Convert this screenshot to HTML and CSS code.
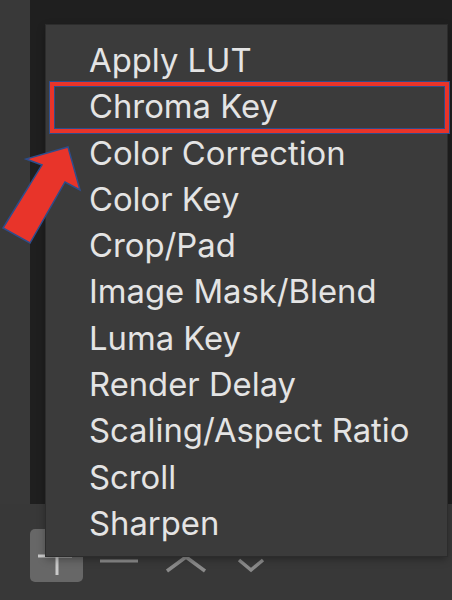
FILE: index.html
```html
<!DOCTYPE html>
<html>
<head>
<meta charset="utf-8">
<link rel="stylesheet" href="styles.css">
</head>
<body>
<div class="app">
  <div class="workspace">
    <div class="sidebar"></div>
    <div class="panel"></div>
  </div>
  <div class="toolbar">
    <button class="tool add" aria-label="Add">
      <svg width="53" height="53" viewBox="0 0 53 53"><path d="M8 27H42M27 8V46" stroke="#c9c9c9" stroke-width="3" fill="none"/></svg>
    </button>
    <span class="tool"><svg width="40" height="30" viewBox="0 0 40 30"><path d="M0 27H38" stroke="#8a8a8a" stroke-width="3"/></svg></span>
    <span class="tool"><svg width="44" height="40" viewBox="0 0 44 40"><path d="M2 37L21 23L40 37" stroke="#8a8a8a" stroke-width="3.5" fill="none"/></svg></span>
    <span class="tool"><svg width="30" height="40" viewBox="0 0 30 40"><path d="M2 26L14 36L26 26" stroke="#8a8a8a" stroke-width="3.5" fill="none"/></svg></span>
  </div>
  <ul class="menu">
    <li>Apply LUT</li>
    <li class="marked">Chroma Key</li>
    <li>Color Correction</li>
    <li>Color Key</li>
    <li>Crop/Pad</li>
    <li>Image Mask/Blend</li>
    <li>Luma Key</li>
    <li>Render Delay</li>
    <li>Scaling/Aspect Ratio</li>
    <li>Scroll</li>
    <li>Sharpen</li>
  </ul>
  <svg class="arrow" width="90" height="250" viewBox="0 0 90 250">
    <polygon points="68,147 80,190 65,182 30,243 3,228 42,165 26,159" fill="#e8342a" stroke="#2d4d8c" stroke-width="1.5" stroke-linejoin="miter"/>
  </svg>
</div>
</body>
</html>
```
FILE: styles.css
```css
html, body {
  margin: 0;
  padding: 0;
}
body {
  background: #383838;
  width: 452px;
  height: 600px;
  overflow: hidden;
  font-family: Inter, "Liberation Sans", sans-serif;
}
.app {
  position: relative;
  width: 452px;
  height: 600px;
  overflow: hidden;
}
.workspace {
  display: flex;
  height: 504px;
}
.sidebar {
  width: 30px;
  background: #393939;
}
.panel {
  flex: 1;
  background: #1f1f1f;
}
.toolbar {
  display: flex;
  align-items: flex-start;
  padding: 25px 0 0 30px;
}
.tool {
  display: block;
  border: 0;
  padding: 0;
  background: none;
}
.tool svg { display: block; }
.add {
  width: 53px;
  height: 53px;
  background: #676767;
  border-radius: 5px;
}
.tool:nth-child(2) { margin: 5px 0 0 17px; }
.tool:nth-child(3) { margin: 5px 0 0 25px; }
.tool:nth-child(4) { margin: 5px 0 0 28px; }
.menu {
  position: absolute;
  left: 46px;
  top: 25px;
  width: 401px;
  height: 531px;
  box-sizing: border-box;
  margin: 0;
  padding: 12px 0 9px 43px;
  list-style: none;
  background: #3b3b3b;
  box-shadow: 0 0 0 1px #2c2c2c, 0 3px 8px rgba(0,0,0,0.35);
}
.menu li {
  position: relative;
  height: 46.3px;
  line-height: 46.3px;
  font-size: 32.8px;
  color: #e4e4e4;
  white-space: nowrap;
}
.marked::before {
  content: "";
  position: absolute;
  left: -39px;
  right: -2px;
  top: -1px;
  bottom: -3px;
  border: 4px solid #e8342a;
  box-shadow: 0 0 0 1px #2d4d8c, inset 0 0 0 1px #2d4d8c;
}
.arrow {
  position: absolute;
  left: 0;
  top: 0;
}
```
